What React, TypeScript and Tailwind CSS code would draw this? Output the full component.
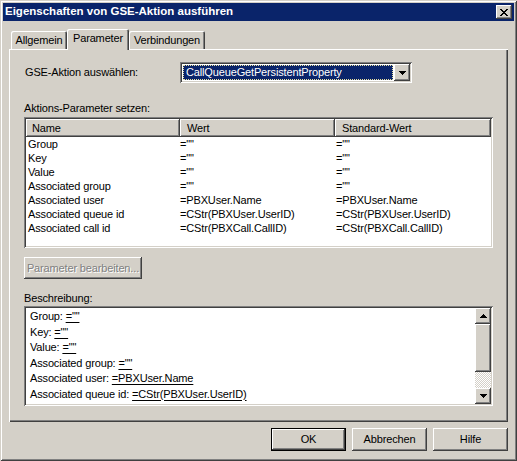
import React from 'react';

// Win2k classic bevels
const RAISED =
  'shadow-[inset_-1px_-1px_#404040,inset_1px_1px_#ffffff,inset_-2px_-2px_#808080,inset_2px_2px_#d4d0c8]';
const SUNKEN =
  'shadow-[inset_1px_1px_#808080,inset_-1px_-1px_#ffffff,inset_2px_2px_#404040,inset_-2px_-2px_#d4d0c8]';
const HEADER = 'shadow-[inset_-1px_-1px_#404040,inset_1px_1px_#ffffff,inset_-2px_-2px_#808080]';

const PARAMS = [
  { name: 'Group', value: '=""', def: '=""' },
  { name: 'Key', value: '=""', def: '=""' },
  { name: 'Value', value: '=""', def: '=""' },
  { name: 'Associated group', value: '=""', def: '=""' },
  { name: 'Associated user', value: '=PBXUser.Name', def: '=PBXUser.Name' },
  { name: 'Associated queue id', value: '=CStr(PBXUser.UserID)', def: '=CStr(PBXUser.UserID)' },
  { name: 'Associated call id', value: '=CStr(PBXCall.CallID)', def: '=CStr(PBXCall.CallID)' },
];

// only the lines that fit in the description box before scrolling
const VISIBLE_DESC = PARAMS.slice(0, 6);

function Arrow({ up = false }: { up?: boolean }) {
  return (
    <svg width="7" height="4" viewBox="0 0 7 4" shapeRendering="crispEdges">
      {up ? (
        <path d="M3 0h1v1h1v1h1v1h1v1H0V3h1V2h1V1h1z" fill="#000" />
      ) : (
        <path d="M0 0h7v1H6v1H5v1H4v1H3V3H2V2H1V1H0z" fill="#000" />
      )}
    </svg>
  );
}

function CloseGlyph() {
  return (
    <svg width="8" height="7" viewBox="0 0 8 7" shapeRendering="crispEdges">
      <path
        d="M0 0h2v1H0zM6 0h2v1H6zM1 1h2v1H1zM5 1h2v1H5zM2 2h4v1H2zM3 3h2v1H3zM2 4h4v1H2zM1 5h2v1H1zM5 5h2v1H5zM0 6h2v1H0zM6 6h2v1H6z"
        fill="#000"
      />
    </svg>
  );
}

function Tab({ label, active = false, width }: { label: string; active?: boolean; width: string }) {
  if (active) {
    return (
      <div
        className={`relative z-10 -mb-px h-[21px] ${width} bg-[#d4d0c8] shadow-[inset_1px_1px_#ffffff,inset_-1px_0_#404040,inset_-2px_0_#808080] rounded-t-[2px] flex items-center justify-center pb-[2px]`}
      >
        {label}
      </div>
    );
  }
  return (
    <div
      className={`h-[18px] ${width} shadow-[inset_1px_1px_#ffffff,inset_-1px_0_#404040,inset_-2px_0_#808080] rounded-t-[2px] flex items-center justify-center pt-[1px]`}
    >
      {label}
    </div>
  );
}

function DialogButton({ label, isDefault = false }: { label: string; isDefault?: boolean }) {
  return (
    <div
      className={`w-[75px] h-[23px] bg-[#d4d0c8] flex items-center justify-center ${RAISED} ${
        isDefault ? 'border border-black' : ''
      }`}
    >
      {label}
    </div>
  );
}

export default function App() {
  return (
    <div
      className={`w-[517px] h-[461px] bg-[#d4d0c8] p-[3px] flex flex-col text-[11px] text-black tracking-[-0.15px] font-['Liberation_Sans',Arial,sans-serif] shadow-[inset_1px_1px_#d4d0c8,inset_-1px_-1px_#404040,inset_2px_2px_#ffffff,inset_-2px_-2px_#808080]`}
    >
      {/* title bar */}
      <div className="h-[18px] bg-[#0a246a] flex items-center justify-between pl-[2px] pr-[2px]">
        <span className="text-white font-bold text-[11.5px] tracking-normal">
          Eigenschaften von GSE-Aktion ausführen
        </span>
        <div className={`w-[16px] h-[14px] bg-[#d4d0c8] flex items-center justify-center ${RAISED}`}>
          <CloseGlyph />
        </div>
      </div>

      <div className="px-[6px] flex flex-col">
        {/* tabs */}
        <div className="mt-[8px] h-[20px] flex items-end pl-[2px]">
          <Tab label="Allgemein" width="w-[56px]" />
          <Tab label="Parameter" width="w-[62px]" active />
          <Tab label="Verbindungen" width="w-[76px]" />
        </div>

        {/* tab panel */}
        <div className="h-[373px] pt-[13px] pl-[15px] flex flex-col shadow-[inset_1px_1px_#ffffff,inset_-1px_-1px_#404040,inset_-2px_-2px_#808080]">
          <div className="flex items-center h-[21px]">
            <span className="w-[156px] pl-[1px]">GSE-Aktion auswählen:</span>
            <div className={`w-[232px] h-[21px] bg-white p-[2px] flex ${SUNKEN}`}>
              <div className="flex-1 p-[1px]">
                <div className="h-full bg-[#0a246a] text-white border border-dotted border-[#e8e0a0] flex items-center pl-[2px]">
                  CallQueueGetPersistentProperty
                </div>
              </div>
              <div className={`w-[16px] h-[17px] bg-[#d4d0c8] flex items-center justify-center ${RAISED}`}>
                <Arrow />
              </div>
            </div>
          </div>

          <div className="mt-[19px] leading-[13px]">Aktions-Parameter setzen:</div>
          <div className={`mt-[2px] w-[469px] h-[131px] bg-white p-[2px] flex flex-col ${SUNKEN}`}>
            <div className="flex h-[18px]">
              <div className={`w-[154px] bg-[#d4d0c8] flex items-center pl-[6px] ${HEADER}`}>Name</div>
              <div className={`w-[155px] bg-[#d4d0c8] flex items-center pl-[7px] ${HEADER}`}>Wert</div>
              <div className={`w-[156px] bg-[#d4d0c8] flex items-center pl-[7px] ${HEADER}`}>
                Standard-Wert
              </div>
            </div>
            {PARAMS.map((p) => (
              <div key={p.name} className="flex h-[14px] leading-[14px]">
                <div className="w-[154px] pl-[2px]">{p.name}</div>
                <div className="w-[155px]">{p.value}</div>
                <div className="w-[156px] pl-[1px]">{p.def}</div>
              </div>
            ))}
          </div>

          <div
            className={`mt-[9px] w-[118px] h-[22px] bg-[#d4d0c8] flex items-center justify-center text-[#808080] [text-shadow:1px_1px_0_#ffffff] ${RAISED}`}
          >
            Parameter bearbeiten...
          </div>

          <div className="mt-[13px] leading-[13px]">Beschreibung:</div>
          <div className={`mt-[1px] w-[469px] h-[100px] bg-white p-[2px] flex ${SUNKEN}`}>
            <div className="flex-1 overflow-hidden pl-[4px] pt-[1px] leading-[15.5px]">
              {VISIBLE_DESC.map((p) => (
                <div key={p.name} className="whitespace-nowrap">
                  {p.name}: <span className="underline underline-offset-[2px]">{p.value}</span>
                </div>
              ))}
            </div>
            <div className="w-[16px] flex flex-col">
              <div className={`h-[16px] bg-[#d4d0c8] flex items-center justify-center ${RAISED}`}>
                <Arrow up />
              </div>
              <div className={`h-[48px] bg-[#d4d0c8] ${RAISED}`} />
              <div className="h-[16px] bg-[repeating-conic-gradient(#ffffff_0_25%,#d4d0c8_0_50%)] bg-[length:2px_2px]" />
              <div className={`h-[16px] bg-[#d4d0c8] flex items-center justify-center ${RAISED}`}>
                <Arrow />
              </div>
            </div>
          </div>
        </div>
      </div>

      {/* dialog buttons */}
      <div className="mt-[6px] flex justify-end gap-[6px] pr-[6px]">
        <DialogButton label="OK" isDefault />
        <DialogButton label="Abbrechen" />
        <DialogButton label="Hilfe" />
      </div>
    </div>
  );
}
